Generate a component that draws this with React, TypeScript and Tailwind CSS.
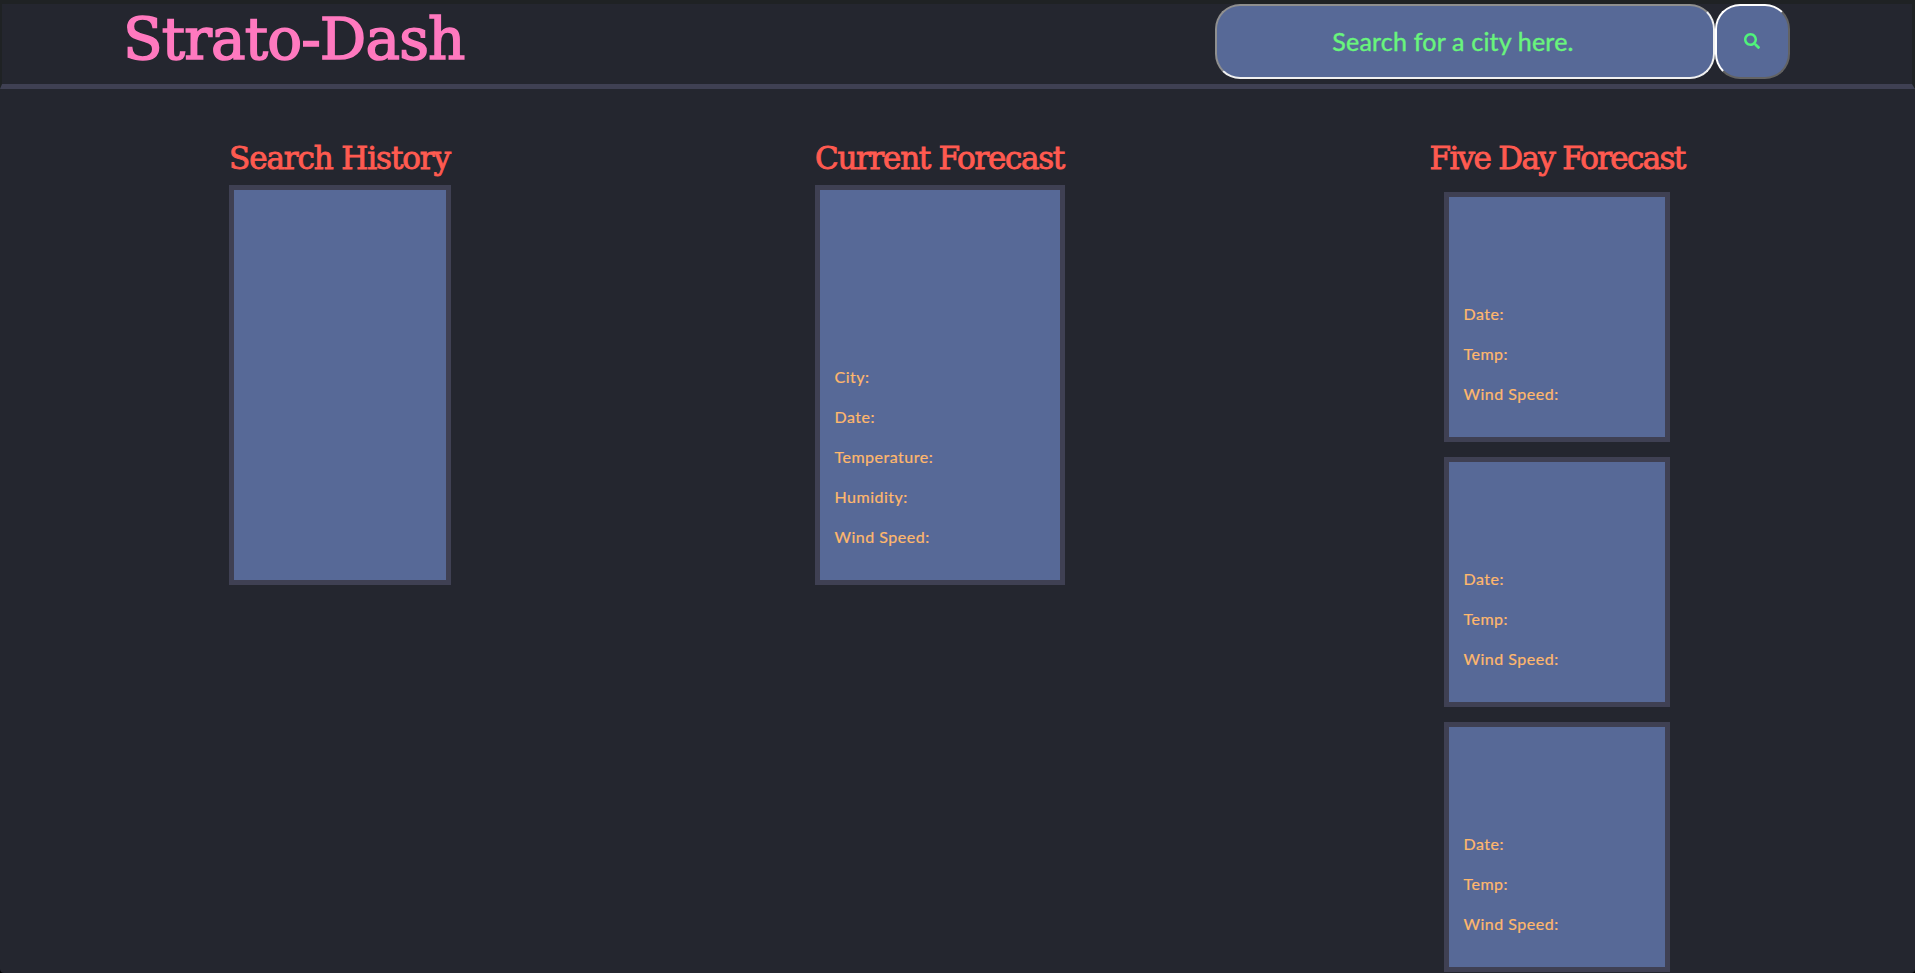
import { FaSearch } from "react-icons/fa";

const currentFields = ["City:", "Date:", "Temperature:", "Humidity:", "Wind Speed:"];
const dayFields = ["Date:", "Temp:", "Wind Speed:"];

function Heading({ text, spacing }: { text: string; spacing: string }) {
  return (
    <h2
      className={`h-[40px] whitespace-nowrap font-['DejaVu_Serif',serif] text-[31px] leading-[42px] font-normal text-[#ff5a50] [-webkit-text-stroke:0.9px_#ff5a50] ${spacing}`}
    >
      {text}
    </h2>
  );
}

function Fields({ items }: { items: string[] }) {
  return (
    <ul className="pl-[14.5px]">
      {items.map((item) => (
        <li
          key={item}
          className="h-[40px] text-[16px] leading-[38px] tracking-[0.5px] text-[#ffb86c] [-webkit-text-stroke:0.2px_#ffb86c]"
        >
          {item}
        </li>
      ))}
    </ul>
  );
}

export default function App() {
  return (
    <div className="h-[973px] w-full overflow-hidden bg-black font-['Lato',sans-serif]">
      <div className="flex h-full flex-col overflow-hidden rounded-b-[4px] bg-[#24262f]">
        <header className="flex h-[89px] shrink-0 items-start justify-between border-t-4 border-r-[3px] border-b-5 border-l-2 border-t-[#1f2224] border-r-[#1f2224] border-b-[#3f4053] border-l-[#1f2224] pr-[122px] pl-[121px]">
          <h1 className="h-[72px] whitespace-nowrap font-['DejaVu_Serif',serif] text-[58px] leading-[70px] tracking-[-0.9px] text-[#ff79bf] [-webkit-text-stroke:1.6px_#ff79bf]">
            Strato-Dash
          </h1>
          <form className="flex" onSubmit={(e) => e.preventDefault()}>
            <input
              aria-label="City"
              placeholder="Search for a city here."
              className="h-[75px] w-[500px] rounded-[25px] border-2 border-t-[#8f8f8f] border-r-[#f0f0f0] border-b-[#f0f0f0] border-l-[#8f8f8f] bg-[#576997] pr-[24px] pb-[2px] text-center text-[25px] tracking-[0.2px] text-[#69f57c] outline-none [-webkit-text-stroke:0.4px_#69f57c] placeholder:text-[#69f57c]"
            />
            <button
              aria-label="Search"
              className="flex size-[75px] items-center justify-center rounded-[25px] border-2 border-t-white border-r-[#636363] border-b-[#636363] border-l-white bg-[#576997] text-[#50f37b]"
            >
              <FaSearch className="mr-[2px] mb-[1px] size-[16px]" />
            </button>
          </form>
        </header>
        <main className="flex items-start pt-[48px] pl-[229px]">
          <section className="w-[222px]">
            <Heading text="Search History" spacing="tracking-[-1.1px]" />
            <div className="mt-[8px] h-[400px] border-5 border-[#3f4053] bg-[#576997]" />
          </section>
          <section className="ml-[364px] w-[250px]">
            <Heading text="Current Forecast" spacing="tracking-[-1.3px]" />
            <div className="mt-[8px] h-[400px] border-5 border-[#3f4053] bg-[#576997] pt-[168px]">
              <Fields items={currentFields} />
            </div>
          </section>
          <section className="ml-[364px] flex w-[256px] flex-col items-center">
            <Heading text="Five Day Forecast" spacing="tracking-[-1.7px]" />
            <div className="mt-[15px] flex flex-col gap-[15px]">
              {[1, 2, 3].map((day) => (
                <div key={day} className="h-[250px] w-[226px] border-5 border-[#3f4053] bg-[#576997] pt-[98px]">
                  <Fields items={dayFields} />
                </div>
              ))}
            </div>
          </section>
        </main>
      </div>
    </div>
  );
}
